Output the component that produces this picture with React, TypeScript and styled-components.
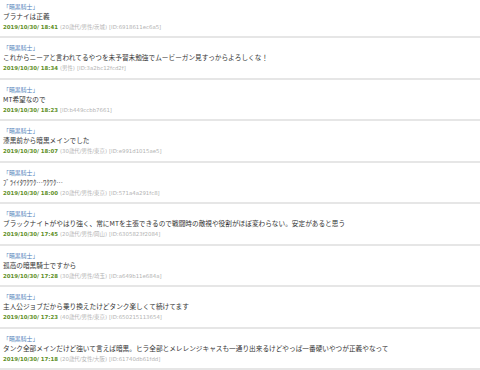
import React from "react";
import styled, { createGlobalStyle } from "styled-components";

const Global = createGlobalStyle`
  html, body { margin: 0; padding: 0; background: #ffffff; }
  body { font-family: "Noto Sans CJK JP", "DejaVu Sans", sans-serif; overflow: hidden; }
`;

const List = styled.div`
  display: flex;
  flex-direction: column;
  margin-top: -3.5px;
`;

const Post = styled.div`
  display: flex;
  flex-direction: column;
  padding: 5px 3px 3.5px;
  border-bottom: 2px solid #e6e6e6;
`;

const Name = styled.div`
  font-family: "Noto Sans CJK JP", sans-serif;
  font-size: 5.9px;
  line-height: 10px;
  height: 10px;
  color: #4f7fba;
  white-space: nowrap;
`;

const Body = styled.div`
  font-family: "Noto Sans CJK JP", sans-serif;
  font-size: 6.67px;
  line-height: 9px;
  height: 9px;
  color: #333333;
  white-space: nowrap;
`;

const Meta = styled.div`
  display: flex;
  align-items: center;
  gap: 2px;
  height: 12px;
  line-height: 12px;
  white-space: nowrap;
  font-family: "DejaVu Sans", "Noto Sans CJK JP", sans-serif;
  font-size: 5.4px;
`;

const DateText = styled.span`
  color: #5e8f27;
  font-weight: bold;
`;

const Info = styled.span`
  color: #b3b3b3;
`;

type Item = { body: string; date: string; user?: string; id: string };

const items: Item[] = [
  { body: "ブラナイは正義", date: "2019/10/30/ 18:41", user: "(20歳代/男性/茨城)", id: "[ID:6918611ec6a5]" },
  { body: "これからニーアと言われてるやつを未予習未勉強でムービーガン見すっからよろしくな！", date: "2019/10/30/ 18:34", user: "(男性)", id: "[ID:3a2bc12fcd2f]" },
  { body: "MT希望なので", date: "2019/10/30/ 18:23", id: "[ID:b449ccbb7661]" },
  { body: "漆黒前から暗黒メインでした", date: "2019/10/30/ 18:07", user: "(30歳代/男性/東京)", id: "[ID:e991d1015ae5]" },
  { body: "ﾌﾞﾗｲｲﾀﾜｸﾜｸ…ﾜｸﾜｸ…", date: "2019/10/30/ 18:00", user: "(20歳代/男性/東京)", id: "[ID:571a4a291fc8]" },
  { body: "ブラックナイトがやはり強く、常にMTを主張できるので戦闘時の敵視や役割がほぼ変わらない。安定があると思う", date: "2019/10/30/ 17:45", user: "(20歳代/男性/岡山)", id: "[ID:6305823f2084]" },
  { body: "孤高の暗黒騎士ですから", date: "2019/10/30/ 17:28", user: "(30歳代/男性/埼玉)", id: "[ID:a649b11e684a]" },
  { body: "主人公ジョブだから乗り換えたけどタンク楽しくて続けてます", date: "2019/10/30/ 17:23", user: "(40歳代/男性/東京)", id: "[ID:650215113654]" },
  { body: "タンク全部メインだけど強いて言えば暗黒。ヒラ全部とメレレンジキャスも一通り出来るけどやっぱ一番硬いやつが正義やなって", date: "2019/10/30/ 17:18", user: "(20歳代/女性/大阪)", id: "[ID:61740db61fdd]" },
];

export default function App() {
  return (
    <>
      <Global />
      <List>
        {items.map((it, i) => (
          <Post key={i}>
            <Name>「暗黒騎士」</Name>
            <Body>{it.body}</Body>
            <Meta>
              <DateText>{it.date}</DateText>
              {it.user && <Info>{it.user}</Info>}
              <Info>{it.id}</Info>
            </Meta>
          </Post>
        ))}
      </List>
    </>
  );
}
